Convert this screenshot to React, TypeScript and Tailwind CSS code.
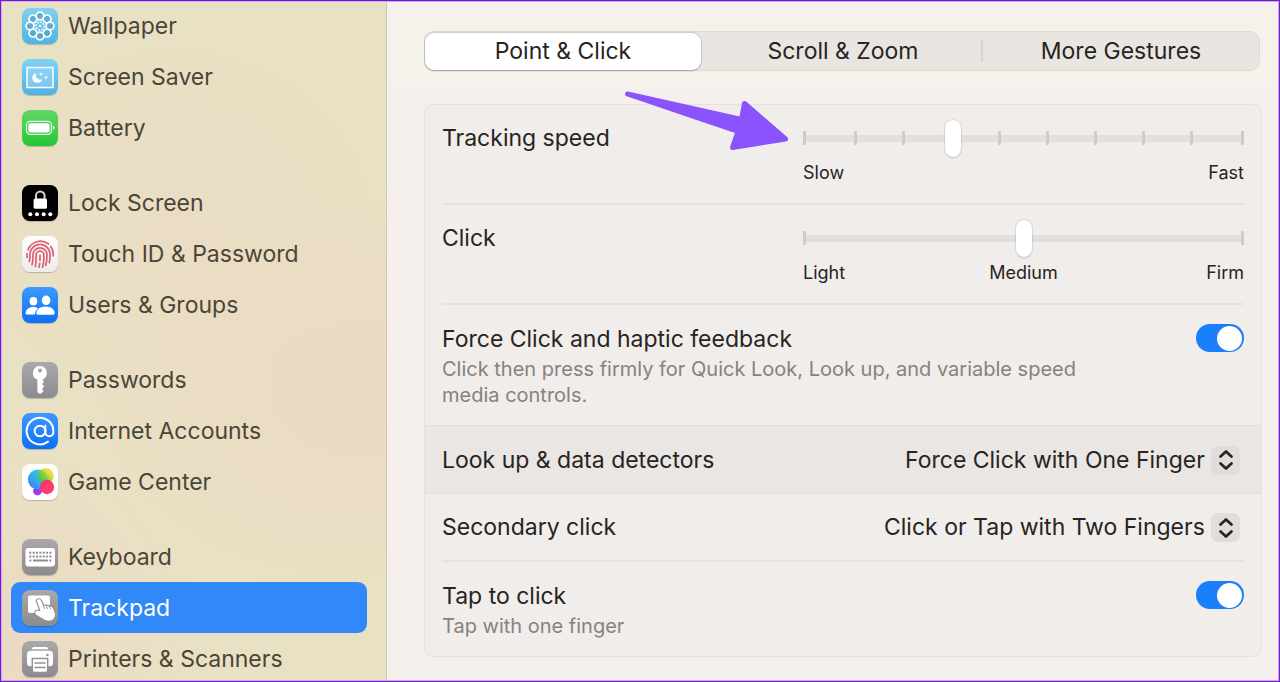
import type { ReactNode } from "react";
import { AtSign } from "lucide-react";

const BLUE_TILE = "bg-linear-to-b from-[#3d9bff] to-[#0a6ef5]";
const SKY_TILE = "bg-linear-to-b from-[#7fd2f3] to-[#4fb2e6]";
const GRAY_TILE = "bg-linear-to-b from-[#aaa8ab] to-[#8c8a8e]";

const Wallpaper = () => (
  <svg viewBox="0 0 36 36" fill="none" stroke="white" strokeWidth="1.7">
    {[0, 45, 90, 135, 180, 225, 270, 315].map((angle) => (
      <circle
        key={angle}
        cx="18"
        cy="8"
        r="3.9"
        fill="#5a9dbb"
        fillOpacity=".6"
        transform={`rotate(${angle} 18 18)`}
      />
    ))}
    <circle cx="18" cy="18" r="4" strokeDasharray="1.6 1.5" />
    <circle cx="18" cy="18" r="1.3" fill="white" stroke="none" />
  </svg>
);

const ScreenSaver = () => (
  <svg viewBox="0 0 36 36" fill="white">
    <rect x="5" y="8.5" width="26" height="20" fill="#ffffff30" stroke="white" strokeWidth="1.5" />
    <path d="M14.2 14a5 5 0 1 0 6 6.2 4.6 4.6 0 0 1-6-6.2z" />
    <path d="M19 13l.6 1.5 1.6.5-1.6.5L19 17l-.6-1.5-1.6-.5 1.6-.5z" />
    <path d="M24 16l.6 1.9 1.7.6-1.7.6L24 21l-.6-1.9-1.7-.6 1.7-.6z" />
  </svg>
);

const Battery = () => (
  <svg viewBox="0 0 36 36" fill="white">
    <rect x="4.5" y="11.3" width="25" height="13" rx="3.8" fill="none" stroke="white" strokeOpacity=".85" strokeWidth="1.3" />
    <rect x="6.4" y="13.2" width="21.2" height="9.2" rx="2.2" />
    <path d="M31 15.8v4c1-.3 1.7-1 1.7-2s-.7-1.7-1.7-2z" fillOpacity=".85" />
  </svg>
);

const LockScreen = () => (
  <svg viewBox="0 0 36 36" fill="white">
    <path d="M14 15v-4.2a4.3 4.3 0 0 1 8.6 0V15" fill="none" stroke="#d4d4d4" strokeWidth="2" />
    <rect x="11.6" y="13.4" width="13.4" height="10.4" rx="1.6" />
    <circle cx="8.3" cy="29.2" r="2" />
    <circle cx="15" cy="29.2" r="2" />
    <circle cx="21.7" cy="29.2" r="2" />
    <circle cx="28.3" cy="29.2" r="2" />
  </svg>
);

const Fingerprint = () => (
  <svg viewBox="0 0 36 36" fill="none" stroke="#dd6072" strokeWidth="1.7" strokeLinecap="round">
    <path d="M5 21.500v-4M6 13.800A13.200 13.200 0 0 1 26.500 8M28.800 10.500a13 13 0 0 1 2.200 9.500" />
    <path d="M7.300 25.500c.7-2.200.6-4.200.6-7a10.100 10.100 0 0 1 20.200 0c0 3-.1 5.500-.8 8.200" />
    <path d="M10 28.600c1.200-3 1-6.200 1-9.800a7 7 0 0 1 14 0c0 4.200-.2 7.400-1.300 10.700" />
    <path d="M13.300 30.500c1-3.700.8-7.800.8-11.500a3.900 3.900 0 0 1 7.800 0c0 4.300-.2 8.400-1.300 12.200" />
    <path d="M18 19.300c0 4.200 0 8.200-1 11.900" strokeDasharray="5 3" />
  </svg>
);

const Users = () => (
  <svg viewBox="0 0 36 36" fill="white">
    <ellipse cx="11.4" cy="14.2" rx="3.8" ry="4.2" />
    <path d="M3.6 26.2c0-3.6 3.4-6.2 7.6-6.2 1.9 0 3.4.5 4.7 1.4-1.9 1.7-3 3.9-3 6.2H5c-1 0-1.4-.5-1.4-1.4z" />
    <ellipse cx="24.1" cy="13.3" rx="4.3" ry="4.8" />
    <path d="M14.3 26c0-3.7 4.2-6.5 9.2-6.5s9.2 2.8 9.2 6.5c0 1.1-.6 1.7-1.7 1.7H16c-1.1 0-1.7-.6-1.7-1.7z" />
  </svg>
);

const Key = () => (
  <svg viewBox="0 0 36 36" fill="white">
    <path
      fillRule="evenodd"
      d="M18 4a7.1 7.1 0 0 0-2.6 13.7v12l2.7 2.6 3.5-3.3-1.7-2 2.4-2.5-2.3-2.5 1.9-1.9-1.3-2.5A7.1 7.1 0 0 0 18 4zm0 2.6a2 2 0 1 1 0 4 2 2 0 0 1 0-4z"
    />
  </svg>
);

const GameCenter = () => (
  <svg viewBox="0 0 36 36">
    <defs>
      <linearGradient id="gcBlue" x1="0" y1="1" x2="1" y2="0">
        <stop offset="0" stopColor="#4a6cf2" />
        <stop offset=".5" stopColor="#2fb4ee" />
        <stop offset="1" stopColor="#45dcc0" />
      </linearGradient>
      <linearGradient id="gcYellow" x1="0" y1="1" x2="1" y2="0">
        <stop offset="0" stopColor="#22b573" />
        <stop offset=".5" stopColor="#8fcf2c" />
        <stop offset=".75" stopColor="#f2dc1e" />
        <stop offset="1" stopColor="#ffb01f" />
      </linearGradient>
    </defs>
    <circle cx="15.5" cy="27" r="4.4" fill="#9a3df0" />
    <circle cx="15.8" cy="15.4" r="9.9" fill="url(#gcBlue)" />
    <circle cx="23.6" cy="12.2" r="8" fill="url(#gcYellow)" fillOpacity=".88" />
    <circle cx="25" cy="23" r="7.2" fill="#ff2d62" fillOpacity=".92" />
  </svg>
);

const Keyboard = () => (
  <svg viewBox="0 0 36 36">
    <rect x="3.5" y="9" width="29.5" height="18.5" rx="2.4" fill="white" />
    <g stroke="#8f8d91" strokeWidth="2">
      <path d="M7.3 13.8h22.2" strokeDasharray="2 1.36" />
      <path d="M7.3 17.6h22.2" strokeDasharray="2 1.36" />
      <path d="M7.3 21.4h2M27.4 21.4h2M11 21.4h15" />
    </g>
  </svg>
);

const Trackpad = () => (
  <svg viewBox="0 0 36 36">
    <rect x="6" y="5.5" width="22" height="17.5" rx="2" fill="white" />
    <path
      d="M14.8 10.6c.6-1.7 3.3-1.7 4 0l2.6 5.500c1.100-.9 2.500-.7 3.100.3 1.100-.8 2.500-.5 3.200.6 1.400-.5 2.700.1 3.300 1.500l1.500 3.700c1.300 3.800-.3 7-3.200 8-2.700.9-5.200.4-7.700-1.200l-7.300-4.300c-2.100-1.300-.9-4.200 1.500-3.800l2.800.4z"
      fill="white"
      stroke="#939195"
      strokeWidth="2.4"
      strokeLinejoin="round"
      paintOrder="stroke"
    />
    <path d="M21.5 16.2l1.2 2.6M24.6 16.6l.9 2M27.7 17.2l.8 1.8" stroke="#939195" strokeWidth=".9" strokeLinecap="round" />
  </svg>
);

const Printer = () => (
  <svg viewBox="0 0 36 36" fill="white">
    <path d="M10 8.2c0-1.6.8-2.2 2.2-2.2h11.6c1.4 0 2.2.6 2.2 2.2z" />
    <path d="M9 9.8h18c3 0 4 1.3 4 4v8c0 2.300-1 3.400-3.600 3.400H8.600C6 25.200 5 24.100 5 21.800v-8c0-2.700 1-4 4-4z" />
    <circle cx="25.5" cy="14" r="1.3" fill="#949297" />
    <path d="M10.3 17.5h15.4v11.8c0 1.5-.7 2.2-2.2 2.2h-11c-1.5 0-2.2-.7-2.2-2.2z" stroke="#949297" strokeWidth="1.5" />
    <path d="M13 22h10M13 26.500h10" stroke="#949297" strokeWidth="1.6" strokeLinecap="round" />
  </svg>
);

type Item = { label: string; tile: string; icon: ReactNode };

const GROUPS: Item[][] = [
  [
    { label: "Wallpaper", tile: SKY_TILE, icon: <Wallpaper /> },
    { label: "Screen Saver", tile: SKY_TILE, icon: <ScreenSaver /> },
    { label: "Battery", tile: "bg-linear-to-b from-[#5fd865] to-[#1fc634]", icon: <Battery /> },
  ],
  [
    { label: "Lock Screen", tile: "bg-black", icon: <LockScreen /> },
    {
      label: "Touch ID & Password",
      tile: "bg-linear-to-b from-white to-[#ececea]",
      icon: <Fingerprint />,
    },
    { label: "Users & Groups", tile: BLUE_TILE, icon: <Users /> },
  ],
  [
    { label: "Passwords", tile: GRAY_TILE, icon: <Key /> },
    {
      label: "Internet Accounts",
      tile: BLUE_TILE,
      icon: <AtSign className="size-8 text-white" strokeWidth={1.5} />,
    },
    { label: "Game Center", tile: "bg-white", icon: <GameCenter /> },
  ],
  [
    { label: "Keyboard", tile: GRAY_TILE, icon: <Keyboard /> },
    { label: "Trackpad", tile: GRAY_TILE, icon: <Trackpad /> },
    { label: "Printers & Scanners", tile: GRAY_TILE, icon: <Printer /> },
  ],
];

const Sidebar = () => (
  <nav className="w-[387px] shrink-0 overflow-hidden border-r border-[#cfc8b4] bg-[#e9e1c4] bg-[radial-gradient(ellipse_75%_30%_at_95%_57%,#ebdac3_20%,transparent),radial-gradient(ellipse_50%_28%_at_0%_92%,#ecdac4_10%,transparent),radial-gradient(ellipse_60%_30%_at_45%_33%,#eaddc4_0%,transparent)] pr-[19px] pl-[11px]">
    <div className="flex flex-col gap-6">
      {GROUPS.map((group) => (
        <ul key={group[0].label}>
          {group.map(({ label, tile, icon }) => (
            <li key={label}>
              <a
                href="#"
                className={
                  label === "Trackpad"
                    ? "flex h-[51px] items-center gap-2.5 rounded-[9px] bg-[#3188f9] px-[11px] text-white"
                    : "flex h-[51px] items-center gap-2.5 px-[11px] text-[#4b4538]"
                }
              >
                <span
                  className={`flex size-9 shrink-0 items-center justify-center rounded-[8px] shadow-[0_1px_1px_#00000033] ${tile}`}
                >
                  {icon}
                </span>
                {label}
              </a>
            </li>
          ))}
        </ul>
      ))}
    </div>
  </nav>
);

const Tabs = () => (
  <div
    role="tablist"
    className="mr-0.5 flex h-10 items-center rounded-[10px] border border-[#dedbd5] bg-[#e9e6e1] leading-9"
  >
    <button
      role="tab"
      aria-selected="true"
      className="mr-1 h-[37px] flex-1 rounded-[9px] bg-white shadow-[0_0_1px_1px_#0000001a,0_1px_2px_#00000033]"
    >
      Point & Click
    </button>
    <button role="tab" aria-selected="false" className="h-full flex-1">
      Scroll & Zoom
    </button>
    <span className="h-[22px] w-0.5 bg-[#d6d3ce]" />
    <button role="tab" aria-selected="false" className="h-full flex-1">
      More Gestures
    </button>
  </div>
);

const Arrow = () => (
  <svg
    className="pointer-events-none absolute right-full bottom-1 mr-3.5 h-[64px] w-[166px]"
    viewBox="0 0 166 64"
    fill="#8a53fd"
    stroke="#8a53fd"
    strokeWidth="5"
    strokeLinejoin="round"
    aria-hidden="true"
  >
    <path d="M4.5 5L118.500 30.500l3-16L162.500 50l-53 8.500 5.500-16z" />
  </svg>
);

const Tick = () => <span className="h-3.5 w-[3px] shrink-0 rounded-[1px] bg-[#cfcbc8]" />;

type SliderProps = {
  id: string;
  max: number;
  value: number;
  ticks?: number;
  marks: string[];
  children?: ReactNode;
};

const Slider = ({ id, max, value, ticks = 0, marks, children }: SliderProps) => (
  <div className="w-[441px]">
    <div className="relative grid h-[38px] items-center">
      <div className="col-start-1 row-start-1 h-[7px] rounded-full bg-[#e3dfdc]" />
      <div className="col-start-1 row-start-1 flex items-center">
        <Tick />
        <div className="flex flex-1 justify-between px-12">
          {Array.from({ length: ticks }, (_, i) => (
            <Tick key={i} />
          ))}
        </div>
        <Tick />
      </div>
      <input
        id={id}
        type="range"
        min={0}
        max={max}
        defaultValue={value}
        className="z-10 col-start-1 row-start-1 h-[38px] w-full appearance-none bg-transparent [&::-webkit-slider-thumb]:h-[37px] [&::-webkit-slider-thumb]:w-4 [&::-webkit-slider-thumb]:appearance-none [&::-webkit-slider-thumb]:rounded-full [&::-webkit-slider-thumb]:bg-white [&::-webkit-slider-thumb]:shadow-[0_0_2px_#00000033,0_1px_2px_#00000026]"
      />
      {children}
    </div>
    <div className="mt-1 flex text-[18px] leading-6">
      {marks.map((mark) => (
        <span key={mark} className="flex-1 text-center first:text-left last:text-right">
          {mark}
        </span>
      ))}
    </div>
  </div>
);

const Toggle = ({ id }: { id: string }) => (
  <input
    id={id}
    type="checkbox"
    role="switch"
    defaultChecked
    className="flex h-7 w-12 shrink-0 appearance-none items-center rounded-full bg-[#b9b5b2] px-0.5 before:size-[25px] before:rounded-full before:bg-white checked:justify-end checked:bg-[#1a7ffa]"
  />
);

const Select = ({ id, value }: { id: string; value: string }) => (
  <div className="relative mr-1">
    <select id={id} className="appearance-none bg-transparent pr-[35px] leading-8">
      <option>{value}</option>
    </select>
    <span className="pointer-events-none absolute top-0.5 right-0 flex size-[29px] items-center justify-center rounded-[7px] bg-[#e1dddb]">
      <svg viewBox="0 0 16 22" className="h-[22px] w-4" fill="none" stroke="#262321" strokeWidth="2.7" strokeLinecap="round" strokeLinejoin="round">
        <path d="M2.500 7.500L8 2.500l5.500 5M2.500 14.500L8 19.500l5.500-5" />
      </svg>
    </span>
  </div>
);

const TrackpadSettings = () => (
  <section className="mt-[33px] rounded-[9px] border border-[#e6e1df] bg-[#f1edea]">
    <div className="mx-[17px] flex h-[100px] justify-between border-b-2 border-[#e7e2df] pt-3.5">
      <label htmlFor="tracking" className="leading-[38px]">
        Tracking speed
      </label>
      <Slider id="tracking" max={9} value={3} ticks={8} marks={["Slow", "Fast"]}>
        <Arrow />
      </Slider>
    </div>
    <div className="mx-[17px] flex h-[100px] justify-between border-b-2 border-[#e7e2df] pt-3.5">
      <label htmlFor="click" className="leading-[38px]">
        Click
      </label>
      <Slider id="click" max={2} value={1} marks={["Light", "Medium", "Firm"]} />
    </div>
    <div className="mx-[17px] flex h-[120px] justify-between pt-[19px]">
      <div>
        <label htmlFor="force" className="block leading-[30px]">
          Force Click and haptic feedback
        </label>
        <p className="mt-0.5 max-w-[660px] text-[20px] leading-[26px] text-[#868280]">
          Click then press firmly for Quick Look, Look up, and variable speed
          media controls.
        </p>
      </div>
      <Toggle id="force" />
    </div>
    <div className="flex h-[69px] items-center justify-between border-y border-[#e4dfdc] bg-[#eae6e3] px-[17px]">
      <label htmlFor="lookup">Look up & data detectors</label>
      <Select id="lookup" value="Force Click with One Finger" />
    </div>
    <div className="mx-[17px] flex h-[68px] items-center justify-between border-b-2 border-[#e7e2df]">
      <label htmlFor="secondary">Secondary click</label>
      <Select id="secondary" value="Click or Tap with Two Fingers" />
    </div>
    <div className="mx-[17px] flex h-[94px] justify-between pt-[19px]">
      <div>
        <label htmlFor="tap" className="block leading-[30px]">
          Tap to click
        </label>
        <p className="mt-0.5 text-[20px] leading-[26px] text-[#868280]">
          Tap with one finger
        </p>
      </div>
      <Toggle id="tap" />
    </div>
  </section>
);

const App = () => (
  <div className="relative flex h-screen overflow-hidden font-['Inter',sans-serif] text-[23px] leading-8 text-[#272422]">
    <Sidebar />
    <main className="min-w-0 flex-1 bg-[linear-gradient(#f5f2ed_0px,#f4f2ea_76px,#f5f0ed_92px)] pt-[31px] pr-[18px] pl-[37px]">
      <Tabs />
      <TrackpadSettings />
    </main>
    <div className="pointer-events-none absolute inset-0 z-20 border border-[#6a1fc4] shadow-[inset_0_0_0_1px_#d9a0ff]" />
  </div>
);

export default App;
